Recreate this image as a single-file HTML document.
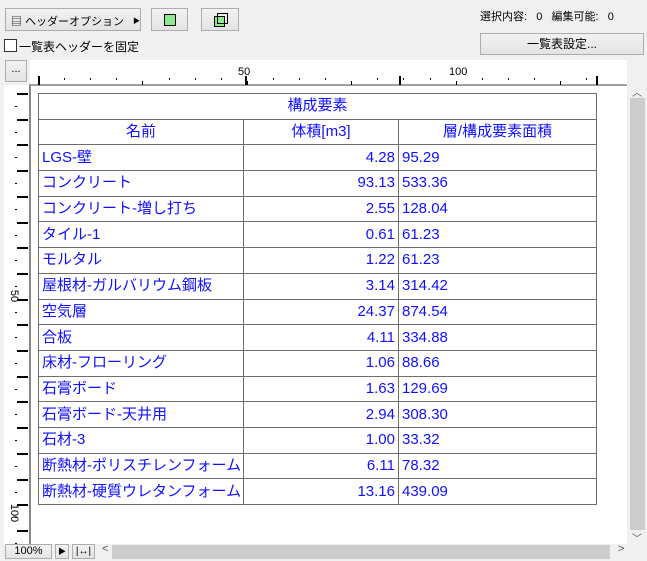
<!DOCTYPE html>
<html><head><meta charset="utf-8"><style>
*{box-sizing:border-box;margin:0;padding:0}
body{width:647px;height:561px;background:#f0f0f0;position:relative;overflow:hidden;font-family:"Liberation Sans","Noto Sans CJK JP",sans-serif;font-size:12px;color:#000}
.a{position:absolute}
.btn{position:absolute;border:1px solid #adadad;background:linear-gradient(#f2f2f2,#e3e3e3)}
table{border-collapse:collapse;table-layout:fixed;position:absolute;left:38px;top:93px;width:558px;color:#1010ff;font-size:15px}
td{border:1px solid #6e6e6e;height:25.7px;padding:0 3px;white-space:nowrap;overflow:hidden;line-height:22px}
.r{text-align:right}.c{text-align:center}
.tick{position:absolute;background:#000}
</style></head><body>
<div class="btn" style="left:5px;top:8px;width:136px;height:23px"><span class="a" style="left:5px;top:4px;font-size:11px">▤ ヘッダーオプション</span><span class="a" style="left:127px;top:7px;font-size:7px">▶</span></div>
<div class="btn" style="left:151px;top:8px;width:37px;height:23px"><div class="a" style="left:12px;top:5px;width:12px;height:12px;background:#8fe98f;border:1px solid #000"></div></div>
<div class="btn" style="left:201px;top:8px;width:38px;height:23px"><div class="a" style="left:12px;top:7px;width:11px;height:11px;background:#8fe98f;border:1px solid #000"></div><div class="a" style="left:15px;top:4px;width:11px;height:11px;border:1px solid #000"></div></div>
<div class="a" style="left:480px;top:8px;font-size:11px">選択内容:&nbsp;&nbsp; 0&nbsp;&nbsp; 編集可能:&nbsp;&nbsp; 0</div>
<div class="a" style="left:4px;top:39px;width:13px;height:13px;border:1px solid #333;background:#fff"></div>
<div class="a" style="left:19px;top:38px;font-size:12px">一覧表ヘッダーを固定</div>
<div class="btn" style="left:480px;top:33px;width:164px;height:22px;text-align:center;line-height:20px">一覧表設定...</div>
<div class="btn" style="left:5px;top:60px;width:22px;height:22px;text-align:center;line-height:16px;font-size:11px">...</div>
<div class="a" style="left:30px;top:60px;width:597px;height:25px;background:#fff"></div>
<div class="a" style="left:4px;top:85px;width:25px;height:460px;background:#fff"></div>
<div class="a" style="left:29px;top:84px;width:598px;height:460px;background:#fff;border-left:2px solid #8a8a8a;border-top:2px solid #a0a0a0"></div>
<div class="a" style="left:238px;top:66px;font-size:11px">50</div>
<div class="a" style="left:449px;top:66px;font-size:11px">100</div>
<div id="rt"></div>
<table>
<colgroup><col style="width:205px"><col style="width:155px"><col style="width:198px"></colgroup>
<tr><td colspan="3" class="c">構成要素</td></tr>
<tr><td class="c">名前</td><td class="c">体積[m3]</td><td class="c">層/構成要素面積</td></tr>
<tr><td>LGS-壁</td><td class="r">4.28</td><td>95.29</td></tr>
<tr><td>コンクリート</td><td class="r">93.13</td><td>533.36</td></tr>
<tr><td>コンクリート-増し打ち</td><td class="r">2.55</td><td>128.04</td></tr>
<tr><td>タイル-1</td><td class="r">0.61</td><td>61.23</td></tr>
<tr><td>モルタル</td><td class="r">1.22</td><td>61.23</td></tr>
<tr><td>屋根材-ガルバリウム鋼板</td><td class="r">3.14</td><td>314.42</td></tr>
<tr><td>空気層</td><td class="r">24.37</td><td>874.54</td></tr>
<tr><td>合板</td><td class="r">4.11</td><td>334.88</td></tr>
<tr><td>床材-フローリング</td><td class="r">1.06</td><td>88.66</td></tr>
<tr><td>石膏ボード</td><td class="r">1.63</td><td>129.69</td></tr>
<tr><td>石膏ボード-天井用</td><td class="r">2.94</td><td>308.30</td></tr>
<tr><td>石材-3</td><td class="r">1.00</td><td>33.32</td></tr>
<tr><td>断熱材-ポリスチレンフォーム</td><td class="r">6.11</td><td>78.32</td></tr>
<tr><td>断熱材-硬質ウレタンフォーム</td><td class="r">13.16</td><td>439.09</td></tr>
</table>
<div class="a" style="left:8px;top:290px;font-size:11px;transform:rotate(90deg)">50</div>
<div class="a" style="left:5px;top:507px;font-size:11px;transform:rotate(90deg)">100</div>
<div class="a" style="left:628px;top:85px;width:19px;height:459px;background:#f0f0f0"></div>
<div class="a" style="left:630px;top:98px;width:15px;height:432px;background:#cdcdcd"></div>
<div class="a" style="left:632px;top:84px;font-size:10px;color:#555">︿</div>
<div class="a" style="left:632px;top:530px;font-size:10px;color:#555">﹀</div>
<div class="btn" style="left:5px;top:544px;width:47px;height:15px;font-size:11px;text-align:center;line-height:13px">100%</div>
<div class="btn" style="left:55px;top:544px;width:14px;height:15px;font-size:8px;text-align:center;line-height:13px">▶</div>
<div class="btn" style="left:72px;top:544px;width:23px;height:15px;font-size:10px;text-align:center;line-height:13px">|↔|</div>
<div class="a" style="left:102px;top:543px;font-size:11px;color:#555">&lt;</div>
<div class="a" style="left:112px;top:545px;width:498px;height:14px;background:#cdcdcd"></div>
<div class="a" style="left:618px;top:543px;font-size:11px;color:#555">&gt;</div>
<script>
var h='';
for(var i=0;i<22;i++){var x=38+i*26.1;if(x>620)break;
 h+='<div class="tick" style="left:'+Math.round(x)+'px;top:'+(i%4==0?81:78)+'px;width:1px;height:'+(i%4==0?4:2)+'px"></div>';}
[38,245,399,596].forEach(function(x){h+='<div class="tick" style="left:'+x+'px;top:76px;width:2px;height:9px"></div>';});
for(var j=0;j<18;j++){var y=93+j*25.7;if(y>540)break;
 h+='<div class="tick" style="left:17px;top:'+Math.round(y)+'px;width:11px;height:2px"></div>';
 h+='<div class="tick" style="left:15px;top:'+Math.round(y+13)+'px;width:2px;height:1px"></div>';}
document.getElementById('rt').innerHTML=h;
</script>
</body></html>
